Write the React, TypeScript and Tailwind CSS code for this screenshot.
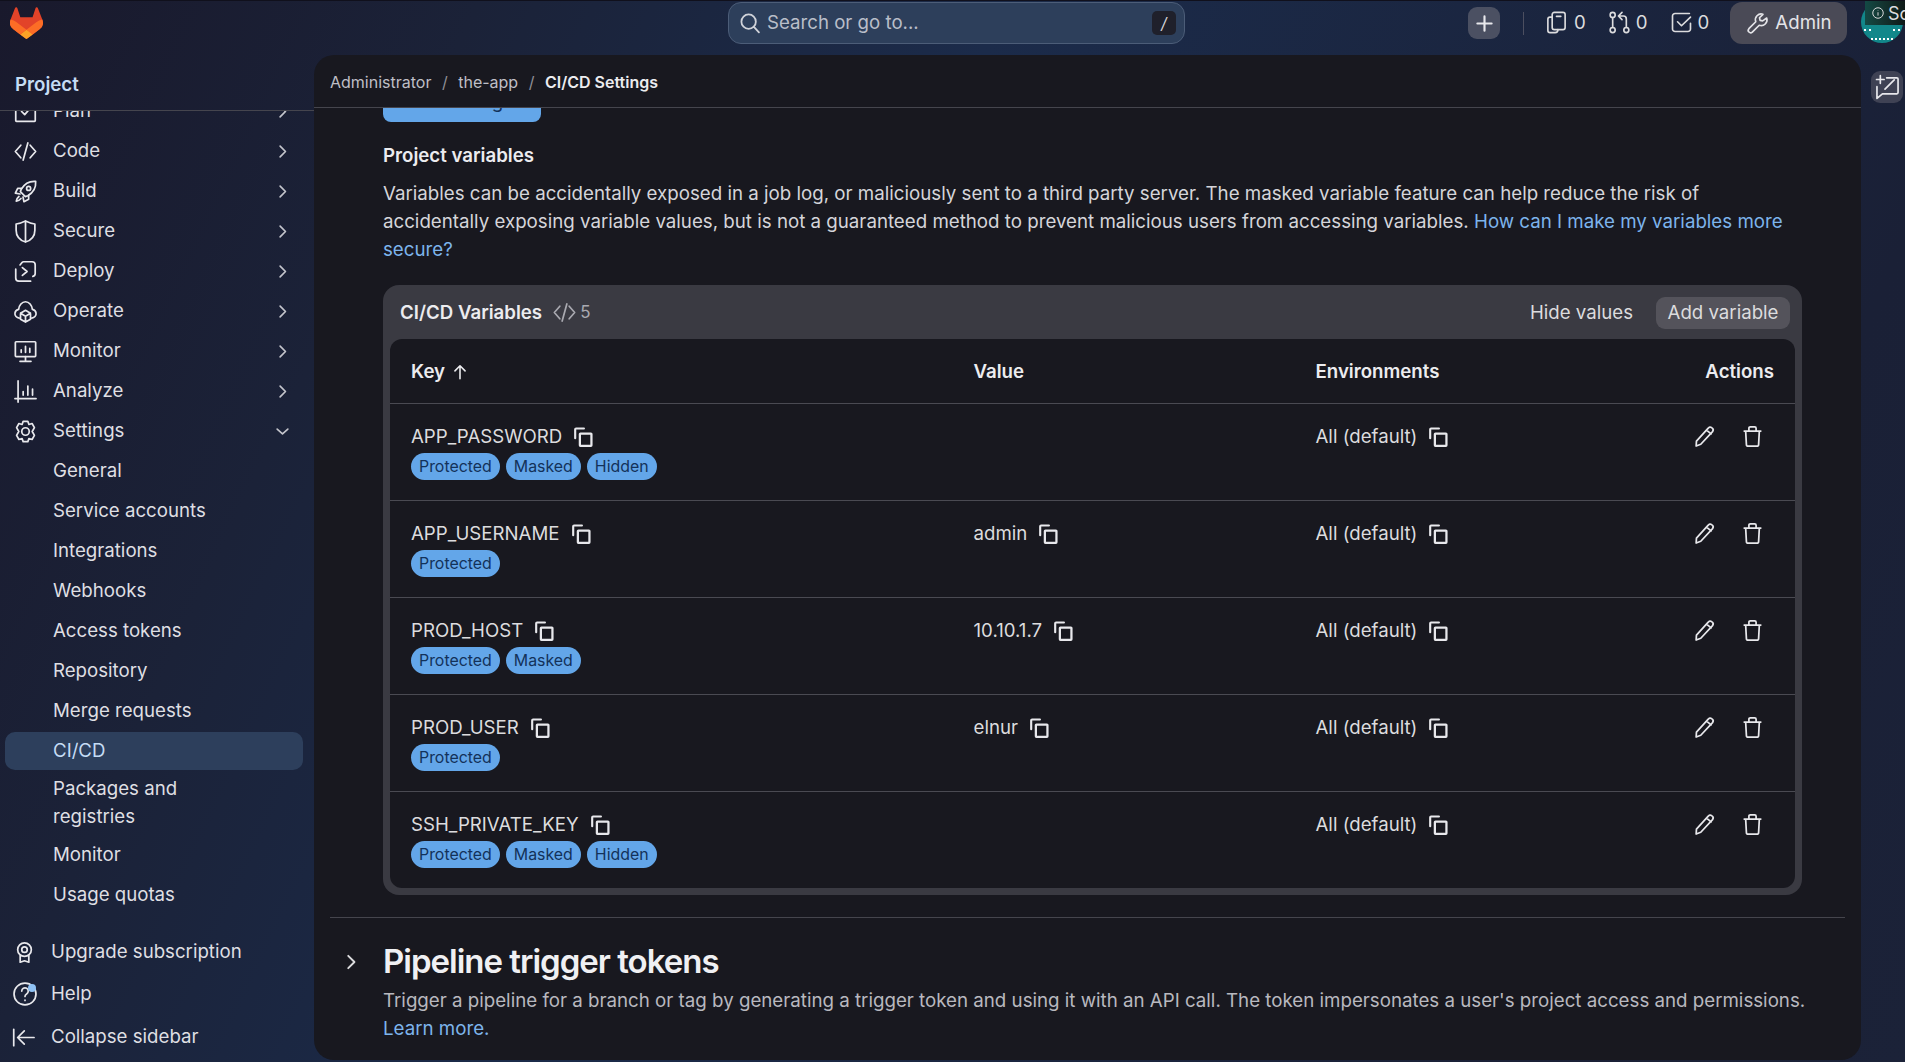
import type { ReactNode } from 'react';

function Icon({ size = 20, stroke = 1.4, className = '', children }: { size?: number; stroke?: number; className?: string; children: ReactNode }) {
  return (
    <svg
      width={size}
      height={size}
      viewBox="0 0 16 16"
      fill="none"
      stroke="currentColor"
      strokeWidth={stroke}
      strokeLinecap="round"
      strokeLinejoin="round"
      className={`shrink-0 ${className}`}
    >
      {children}
    </svg>
  );
}

const paths: Record<string, ReactNode> = {
  plan: (
    <>
      <rect x="1.75" y="1.75" width="12.5" height="12.5" rx="0.5" />
      <path d="M5.5 8l2 2 3-3.5" />
    </>
  ),
  code: <path d="M5 4 1.5 8 5 12M11 4l3.5 4L11 12M9.5 2.5l-3 11" />,
  build: (
    <>
      <path d="M14.5 1.5c-4-.3-7.2 1.6-9.2 5l-.6 1.6 3.2 3.2 1.6-.6c3.4-2 5.3-5.2 5-9.2z" />
      <circle cx="10" cy="6" r="1.3" />
      <path d="M5.5 6H3L1.5 9l3 .6M10 10.5V13l-3 1.5-.6-3M3.8 11.2c-1 .8-1.6 1.9-1.7 3 1.1-.1 2.2-.7 3-1.7" />
    </>
  ),
  secure: <path d="M8 14.75c-3.6-1.2-6-3.9-6-7.6V3.2C4 2.9 6 2.2 8 1.25c2 .95 4 1.65 6 1.95v3.95c0 3.7-2.4 6.4-6 7.6zM8 1.25v13.5" />,
  deploy: <path d="M4.5 3.8l1.4-1.7c.2-.2.4-.35.8-.35h5.5a2 2 0 0 1 2 2v5.5c0 1-.5 1.6-1.5 1.9M1.75 6.5V12.2a2 2 0 0 0 2 2h7.5M6 5.5 9 8l-3 2.5" />,
  operate: (
    <>
      <path d="M4 12.2c-1.6-.2-3-1.4-2.75-3.2.2-1.3 1.2-2.2 2.35-2.4C3.9 4 5.7 1.75 8 1.75S12.1 4 12.4 6.6c1.15.2 2.15 1.1 2.35 2.4.25 1.8-1.15 3-2.75 3.2" />
      <path d="M8 7.25l3.2 1.85v3.8L8 14.75 4.8 12.9V9.1zM4.8 9.1 8 11l3.2-1.9M8 11v3.75" />
    </>
  ),
  monitor: (
    <>
      <rect x="1.5" y="1.75" width="13" height="9.5" rx="0.5" />
      <path d="M8 11.25v2.5M4.5 14.25h7M5.25 8.5V7M8 8.5V4.75M10.75 8.5V6" />
    </>
  ),
  analyze: <path d="M3.25 1.25v13.5M1.25 12.5h13.5M6.5 10.25V8M9.5 10.25V4.5M12.5 10.25V6.5" />,
  settings: (
    <>
      <path d="M6.5 1.5h3l.7 2 2-.6 1.5 2.6-1.4 2.5 1.4 2.5-1.5 2.6-2-.6-.7 2h-3l-.7-2-2 .6-1.5-2.6L3.7 8 2.3 5.5l1.5-2.6 2 .6z" />
      <circle cx="8" cy="8" r="2.4" />
    </>
  ),
  copy: (
    <>
      <rect x="5.5" y="5.25" width="9.25" height="9.75" rx="0.4" strokeWidth={1.8} />
      <path d="M1.75 9V1.9c0-.4.3-.7.7-.7h6.3" strokeWidth={1.7} />
    </>
  ),
  pencil: <path d="M10.6 2.2c.6-.8 1.6-1 2.3-.4l.5.4c.7.6.8 1.6.2 2.4L5.4 13.4l-3.2 1.2.2-3.4zM9.4 3.6l3.2 2.6" />,
  trash: <path d="M3.25 4.25h9.5l-.5 9.25c0 .8-.7 1.25-1.4 1.25H5.15c-.7 0-1.4-.45-1.4-1.25zM2.25 4.25h11.5M5.5 4.25V2.2c0-.5.4-.95 1-.95h3c.6 0 1 .45 1 .95v2.05" />,
  chevronRight: <path d="M6 3.5 10.5 8 6 12.5" />,
  chevronDown: <path d="M3.5 6 8 10l4.5-4" />,
  upgrade: (
    <>
      <circle cx="8" cy="6" r="4.75" />
      <circle cx="8" cy="6" r="1.9" />
      <path d="M5 10v4.75l3-1 3 1V10" />
    </>
  ),
  help: (
    <>
      <circle cx="8" cy="8" r="6.75" />
      <path d="M6 6.2a2 2 0 1 1 3 1.75c-.7.4-1 .9-1 1.55M8 11.75v.2" />
    </>
  ),
  collapse: <path d="M1.75 2.75v10.5M14.75 8H4.5M8.5 3.75 4.25 8l4.25 4.25" />,
  search: <path d="M7 1.75a5.25 5.25 0 1 0 0 10.5 5.25 5.25 0 0 0 0-10.5zM11 11l3.5 3.75" />,
  plus: <path d="M8 2v12M2 8h12" strokeWidth={1.8} />,
  issues: (
    <>
      <rect x="5" y="1" width="9" height="12" rx="1.5" />
      <path d="M8 3.75h3M5 4.25H3.5a1.5 1.5 0 0 0-1.5 1.5v7.75A1.5 1.5 0 0 0 3.5 15H7a2 2 0 0 0 2-2" />
    </>
  ),
  mr: (
    <>
      <circle cx="3.25" cy="2.75" r="1.75" />
      <circle cx="3.25" cy="13.25" r="1.75" />
      <circle cx="12.75" cy="13.25" r="1.75" />
      <path d="M3.25 4.5v7M12.75 11.5V5.5a2 2 0 0 0-2-2H7.5M9.75 1 7.25 3.5 9.75 6" />
    </>
  ),
  todo: <path d="M13.5 1.75H3.5A1.75 1.75 0 0 0 1.75 3.5v9a1.75 1.75 0 0 0 1.75 1.75h9a1.75 1.75 0 0 0 1.75-1.75V8.5M5.25 7.5 8 10.25l6.25-6" />,
  wrench: <path d="M14.4 4.2a4 4 0 0 1-5.2 5L4.4 14a1.7 1.7 0 0 1-2.4-2.4l4.8-4.8a4 4 0 0 1 5-5.2L9.4 4l.4 1.8 1.8.4z" />,
  chat: <path d="M7.5 2.25h6a.75.75 0 0 1 .75.75v8a.75.75 0 0 1-.75.75H5L1.75 14.5V7.5M6.5 9 12 3.5M3.75 1v4.5M1.5 3.25H6" />,
};

const navItems = [
  { label: 'Plan', icon: 'plan' },
  { label: 'Code', icon: 'code' },
  { label: 'Build', icon: 'build' },
  { label: 'Secure', icon: 'secure' },
  { label: 'Deploy', icon: 'deploy' },
  { label: 'Operate', icon: 'operate' },
  { label: 'Monitor', icon: 'monitor' },
  { label: 'Analyze', icon: 'analyze' },
];

const settingsItems = ['General', 'Service accounts', 'Integrations', 'Webhooks', 'Access tokens', 'Repository', 'Merge requests'];

const variables = [
  { key: 'APP_PASSWORD', value: '', badges: ['Protected', 'Masked', 'Hidden'] },
  { key: 'APP_USERNAME', value: 'admin', badges: ['Protected'] },
  { key: 'PROD_HOST', value: '10.10.1.7', badges: ['Protected', 'Masked'] },
  { key: 'PROD_USER', value: 'elnur', badges: ['Protected'] },
  { key: 'SSH_PRIVATE_KEY', value: '', badges: ['Protected', 'Masked', 'Hidden'] },
];

function CopyButton() {
  return (
    <Icon size={20} className="ml-[11px] text-[#e8e8ec]">
      {paths.copy}
    </Icon>
  );
}

function TopBar() {
  return (
    <header className="flex h-[55px] shrink-0 items-start border-t border-[#10101c]">
      <svg width="33" height="32" viewBox="0 0 25 24" className="ml-[10px] mt-[6px] shrink-0">
        <path d="m24.507 9.5-.034-.09L21.082.562a.896.896 0 0 0-1.694.091l-2.29 7.01H7.825L5.535.653a.898.898 0 0 0-1.694-.09L.451 9.411.416 9.5a6.297 6.297 0 0 0 2.09 7.278l.012.01.03.022 5.16 3.867 2.56 1.935 1.554 1.176a1.051 1.051 0 0 0 1.268 0l1.555-1.176 2.56-1.935 5.197-3.89.014-.01A6.297 6.297 0 0 0 24.507 9.5Z" fill="#E24329" />
        <path d="m24.507 9.5-.034-.09a11.44 11.44 0 0 0-4.56 2.051l-7.447 5.632 4.742 3.584 5.197-3.89.014-.01A6.297 6.297 0 0 0 24.507 9.5Z" fill="#FC6D26" />
        <path d="m7.707 20.677 2.56 1.935 1.555 1.176a1.051 1.051 0 0 0 1.268 0l1.555-1.176 2.56-1.935-4.743-3.584-4.755 3.584Z" fill="#FCA326" />
        <path d="M5.01 11.461a11.43 11.43 0 0 0-4.56-2.05L.416 9.5a6.297 6.297 0 0 0 2.09 7.278l.012.01.03.022 5.16 3.867 4.745-3.584-7.444-5.632Z" fill="#FC6D26" />
      </svg>

      <div className="ml-[685px] mt-[1px] flex h-[42px] w-[457px] shrink-0 items-center rounded-[13px] border border-[#4c5d78] bg-[#2d3f5b] pl-[10px] pr-2 text-[#b9bec9]">
        <Icon size={22} stroke={1.3} className="text-[#d0d3da]">{paths.search}</Icon>
        <span className="ml-[6px] text-[18.67px]">Search or go to...</span>
        <span className="ml-auto flex h-6 w-6 items-center justify-center rounded-[5px] bg-[#1f202b] text-[16px] italic text-[#d5d5da]">/</span>
      </div>

      <div className="ml-[283px] mt-[6px] flex h-8 w-8 shrink-0 items-center justify-center rounded-[9px] bg-[#4b5062] text-[#e8e8ec]">
        <Icon size={19}>{paths.plus}</Icon>
      </div>
      <div className="ml-[23px] mt-[11px] h-[23px] w-px shrink-0 bg-[#4c4f60]" />

      <div className="ml-[21px] mt-[10px] flex items-center gap-[6px] text-[18.67px] leading-[22px] text-[#dcdcde]">
        <Icon size={23} stroke={1.15}>{paths.issues}</Icon>
        <span>0</span>
      </div>
      <div className="ml-[22px] mt-[10px] flex items-center gap-[5px] text-[18.67px] leading-[22px] text-[#dcdcde]">
        <Icon size={23} stroke={1.15}>{paths.mr}</Icon>
        <span>0</span>
      </div>
      <div className="ml-[22px] mt-[10px] flex items-center gap-[5px] text-[18.67px] leading-[22px] text-[#dcdcde]">
        <Icon size={23} stroke={1.15}>{paths.todo}</Icon>
        <span>0</span>
      </div>

      <div className="ml-[21px] mt-[1px] flex h-[42px] w-[117px] shrink-0 items-center rounded-[12px] bg-[#4a4a56] pl-[16px] text-[18.67px] text-[#e4e4e8]">
        <Icon size={23} stroke={1.15}>{paths.wrench}</Icon>
        <span className="ml-[6px]">Admin</span>
      </div>
    </header>
  );
}

function Avatar() {
  return (
    <div className="absolute right-0 top-0 h-[44px] w-[44px] overflow-hidden">
      <div className="absolute left-0 top-[1px] h-[42px] w-[42px] overflow-hidden rounded-full bg-[#12878a]">
        <div className="absolute left-[3px] top-[28px] h-[2px] w-[7px] border-t-2 border-dotted border-white" />
        <div className="absolute right-[3px] top-[28px] h-[2px] w-[7px] border-t-2 border-dotted border-white" />
        <div className="absolute left-[10px] top-[37px] h-[2px] w-[22px] border-t-2 border-dotted border-white" />
      </div>
      <div className="absolute left-[4px] top-[1px] flex h-[24px] w-[40px] items-center gap-[4px] bg-gradient-to-r from-[#134a45] to-[#0f1a18] pl-[7px] text-[18px] text-[#dcdcde]">
        <svg width="12" height="12" viewBox="0 0 16 16" fill="none" stroke="currentColor" strokeWidth={1.3} className="shrink-0">
          <circle cx="8" cy="8" r="7" />
          <path d="M8 7v4.5M8 4.2v.6" />
        </svg>
        <span>Sc</span>
      </div>
    </div>
  );
}

function NavRow({ label, icon, open }: { label: string; icon: string; open?: boolean }) {
  return (
    <div className="flex h-10 items-center pl-[13px] pr-[22px] text-[18.67px] text-[#dfdfe3]">
      <Icon size={25} stroke={1.1} className="text-[#e8e8ec]">{paths[icon]}</Icon>
      <span className="ml-[15px]">{label}</span>
      <Icon size={19} className="ml-auto text-[#c4c5cc]">{open ? paths.chevronDown : paths.chevronRight}</Icon>
    </div>
  );
}

function Sidebar() {
  return (
    <aside className="flex w-[314px] shrink-0 flex-col overflow-hidden">
      <div className="flex h-[55px] shrink-0 items-center pl-[15px] pt-[5px] text-[18.67px] font-semibold text-[#c5dcf5]">Project</div>
      <div className="h-px shrink-0 bg-[#45454e]" />
      <nav className="min-h-0 flex-1 overflow-hidden">
        <div className="mt-[-20px]">
          {navItems.map((item) => (
            <NavRow key={item.label} label={item.label} icon={item.icon} />
          ))}
          <NavRow label="Settings" icon="settings" open />
          {settingsItems.map((item) => (
            <div key={item} className="flex h-10 items-center pl-[53px] text-[18.67px] text-[#dfdfe3]">{item}</div>
          ))}
          <div className="my-px ml-[5px] mr-[11px] flex h-[38px] items-center rounded-[10px] bg-[#2d3f5c] pl-[48px] text-[18.67px] text-[#c5dcf5]">CI/CD</div>
          <div className="py-1 pl-[53px] text-[18.67px] leading-[28px] text-[#dfdfe3]">Packages and<br />registries</div>
          <div className="flex h-10 items-center pl-[53px] text-[18.67px] text-[#dfdfe3]">Monitor</div>
          <div className="flex h-10 items-center pl-[53px] text-[18.67px] text-[#dfdfe3]">Usage quotas</div>
        </div>
      </nav>
      <div className="h-[131px] shrink-0 text-[18.67px] text-[#dfdfe3]">
        <div className="flex h-[42px] items-center pl-[13px]">
          <Icon size={23} stroke={1.2} className="text-[#e8e8ec]">{paths.upgrade}</Icon>
          <span className="ml-[15px]">Upgrade subscription</span>
        </div>
        <div className="flex h-[42px] items-center pl-[12px]">
          <span className="relative">
            <Icon size={26} stroke={1.05} className="text-[#e8e8ec]">{paths.help}</Icon>
            <span className="absolute right-[2px] top-[3px] h-[8px] w-[8px] rounded-full bg-[#8fc2f5]" />
          </span>
          <span className="ml-[13px]">Help</span>
        </div>
        <div className="mt-[1px] flex h-[42px] items-center pl-[11px]">
          <Icon size={25} stroke={1.1} className="text-[#e8e8ec]">{paths.collapse}</Icon>
          <span className="ml-[15px]">Collapse sidebar</span>
        </div>
      </div>
    </aside>
  );
}

function Badge({ label }: { label: string }) {
  return (
    <span className="flex h-[27px] items-center rounded-full bg-[#63a6e9] px-2 text-[15.9px] text-[#13325a]">{label}</span>
  );
}

function VariablesCard() {
  return (
    <div className="ml-[69px] mr-[59px] mt-[21px] rounded-[16px] bg-[#3a3a42] px-[7px] pb-[7px]">
      <div className="flex h-[54px] items-center pl-[10px] pr-[5px] pt-px text-[18.67px]">
        <span className="font-semibold text-[#ececef]">CI/CD Variables</span>
        <Icon size={25} stroke={1.1} className="ml-[10px] text-[#a9a9b0]">{paths.code}</Icon>
        <span className="ml-[3px] text-[17px] text-[#a9a9b0]">5</span>
        <span className="ml-auto text-[#dcdcde]">Hide values</span>
        <span className="ml-[23px] flex h-8 w-[134px] items-center justify-center rounded-[9px] bg-[#54535b] text-[#dcdcde]">Add variable</span>
      </div>
      <div className="rounded-[12px] bg-[#18181f] text-[18.67px] text-[#dcdcde]">
        <div className="grid h-[64px] grid-cols-[562.5px_342px_1fr_auto] items-center px-[21px] pt-px font-semibold text-[#ececef]">
          <div className="flex items-center gap-[6px]">
            Key
            <svg width="18" height="18" viewBox="0 0 16 16" fill="none" stroke="currentColor" strokeWidth={1.4} strokeLinecap="round" strokeLinejoin="round">
              <path d="M8 14V2.5M3.5 7 8 2.5 12.5 7" />
            </svg>
          </div>
          <div>Value</div>
          <div>Environments</div>
          <div>Actions</div>
        </div>
        {variables.map((row) => (
          <div key={row.key} className="grid h-[97px] grid-cols-[562.5px_342px_1fr_auto] border-t border-[#4a4a52] px-[21px] pt-[19px]">
            <div>
              <div className="flex h-7 items-center">
                {row.key}
                <CopyButton />
              </div>
              <div className="mt-[2px] flex gap-[6px]">
                {row.badges.map((badge) => (
                  <Badge key={badge} label={badge} />
                ))}
              </div>
            </div>
            <div>
              {row.value && (
                <div className="flex h-7 items-center">
                  {row.value}
                  <CopyButton />
                </div>
              )}
            </div>
            <div>
              <div className="flex h-7 items-center">
                All (default)
                <CopyButton />
              </div>
            </div>
            <div className="-mt-px flex h-7 items-center gap-[25px] pr-[10px] text-[#e8e8ec]">
              <Icon size={23} stroke={1.2}>{paths.pencil}</Icon>
              <Icon size={23} stroke={1.2}>{paths.trash}</Icon>
            </div>
          </div>
        ))}
      </div>
    </div>
  );
}

export default function App() {
  return (
    <div className="relative h-[1062px] w-full overflow-hidden bg-[linear-gradient(115deg,#19192c_0%,#1b2238_20%,#1b2b4a_42%,#1a2036_84%,#1b2238_100%)] font-['Inter','Noto_Sans',sans-serif]">
      <TopBar />
      <Avatar />
      <div className="flex h-[1007px]">
        <Sidebar />
        <main className="mb-[2px] flex w-[1547px] shrink-0 flex-col overflow-hidden rounded-[20px] bg-[#18181f]">
          <div className="flex h-[53px] shrink-0 items-center gap-[10.5px] border-b border-[#45454d] pl-[16px] pt-[2px] text-[16px] text-[#bfbfc6]">
            <span>Administrator</span>
            <span className="text-[#8f8f96]">/</span>
            <span>the-app</span>
            <span className="text-[#8f8f96]">/</span>
            <span className="font-semibold text-[#ececef]">CI/CD Settings</span>
          </div>
          <div className="min-h-0 flex-1 overflow-hidden">
            <div className="ml-[69px] mt-[-26px] flex h-10 w-[158px] items-center justify-center rounded-[8px] bg-[#63a6e9] text-[18.67px] text-[#13325a]">Save changes</div>
            <div className="ml-[69px] mr-[59px] mt-[20px] text-[18.67px] leading-[28px] font-semibold text-[#ececef]">Project variables</div>
            <p className="ml-[69px] mr-[59px] mt-[10px] text-[18.72px] leading-[28px] text-[#d5d5da]">
              Variables can be accidentally exposed in a job log, or maliciously sent to a third party server. The masked variable feature can help reduce the risk of accidentally exposing variable values, but is not a guaranteed method to prevent malicious users from accessing variables.{' '}
              <span className="text-[#7db4ec]">How can I make my variables more secure?</span>
            </p>
            <VariablesCard />
            <div className="mx-[16px] mt-[22px] border-t border-[#45454d]">
              <div className="mt-[22px] flex h-[44px] items-center">
                <Icon size={22} className="ml-[10px] text-[#dcdcde]">{paths.chevronRight}</Icon>
                <h2 className="ml-[21px] text-[33px] font-semibold tracking-[-1px] text-[#f0f0f3]">Pipeline trigger tokens</h2>
              </div>
              <p className="ml-[53px] mr-[30px] mt-[3px] text-[18.72px] leading-[28px] text-[#b8b8bf]">
                Trigger a pipeline for a branch or tag by generating a trigger token and using it with an API call. The token impersonates a user's project access and permissions.{' '}
                <span className="text-[#7db4ec]">Learn more.</span>
              </p>
            </div>
          </div>
        </main>
        <div className="flex-1 pl-[10px] pt-[16px]">
          <div className="flex h-8 w-8 items-center justify-center rounded-[9px] bg-[#3f4254] text-[#e8e8ec]">
            <Icon size={27} stroke={1}>{paths.chat}</Icon>
          </div>
        </div>
      </div>
    </div>
  );
}
